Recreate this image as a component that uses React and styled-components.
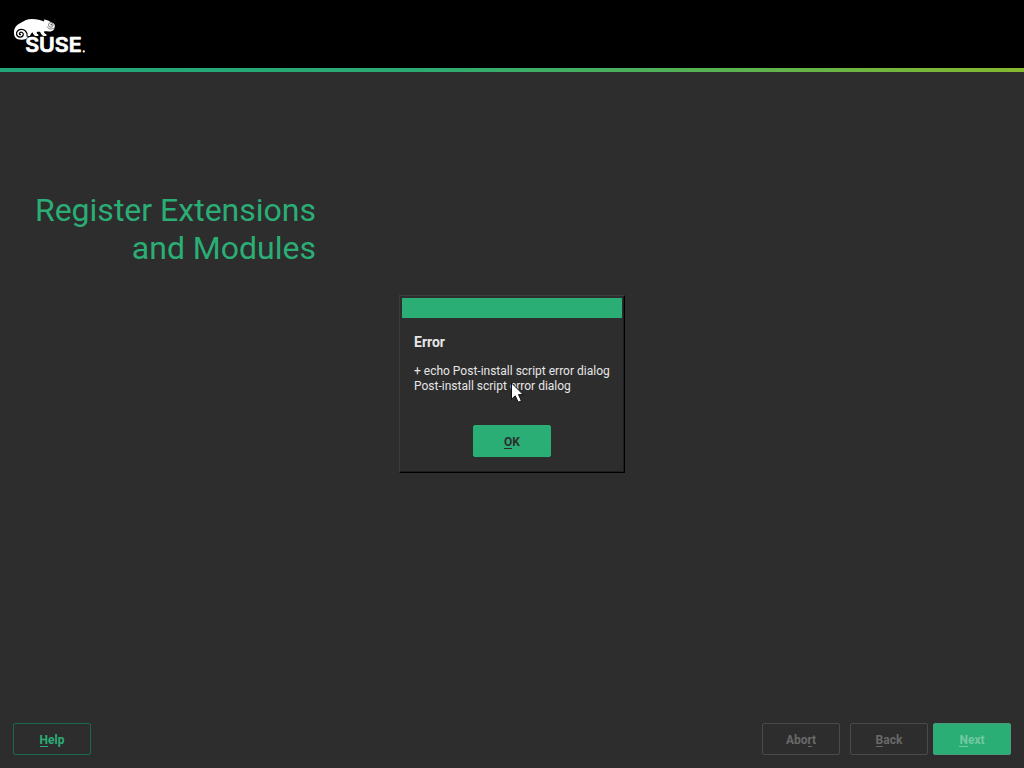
import React from "react";
import styled, { createGlobalStyle, css } from "styled-components";

const GlobalStyle = createGlobalStyle`
  body {
    margin: 0;
    background: #2d2d2d;
    font-family: Roboto, "Liberation Sans", sans-serif;
  }
  * { box-sizing: border-box; }
`;

const Screen = styled.div`
  position: relative;
  display: flex;
  flex-direction: column;
  width: 1024px;
  height: 768px;
  overflow: hidden;
  background: #2d2d2d;
`;

const Header = styled.header`
  flex: none;
  height: 68px;
  padding: 15px 0 0 10px;
  background: #000;
`;

const LogoSvg = styled.svg`
  display: block;
  width: 80px;
  height: 42px;
`;

const Wordmark = styled.text`
  font: 600 20.2px Inter, Roboto, sans-serif;
  fill: #fff;
  stroke: #fff;
  stroke-width: 0.7px;
  stroke-linejoin: round;
`;

const Stripe = styled.div`
  flex: none;
  height: 4px;
  background: linear-gradient(90deg, #21a57a 0%, #2aab74 40%, #86b92f 100%);
`;

const Main = styled.main`
  flex: 1;
  padding: 119px 0 0 20px;
`;

const Title = styled.h1`
  width: 296px;
  margin: 0;
  color: #2aae76;
  font-size: 32px;
  font-weight: 400;
  line-height: 38px;
  text-align: right;
`;

const Footer = styled.footer`
  flex: none;
  display: flex;
  justify-content: space-between;
  height: 45px;
  padding: 0 13px;
`;

const Actions = styled.div`
  display: flex;
  gap: ${({ $gap }) => $gap}px;
`;

const variants = {
  outline: css`
    color: #2aae76;
    border-color: #1a6b4b;
  `,
  disabled: css`
    color: #696969;
    border-color: #4a4a4a;
  `,
  disabledPrimary: css`
    color: #72c9a3;
    background: #2aae76;
    border-color: #4a9c78;
  `,
  primary: css`
    color: #2d2d2d;
    background: #2aae76;
    border-color: #2aae76;
  `,
};

const Button = styled.button`
  width: 78px;
  height: 32px;
  padding: 2px 0 0;
  border: 1px solid;
  border-radius: 2px;
  background: transparent;
  font: 700 12px/15px Roboto, sans-serif;
  ${({ $variant }) => variants[$variant]}
`;

const Mnemonic = styled.span`
  display: inline-block;
  height: 14px;
  box-shadow: inset 0 -1px currentColor;
`;

const Overlay = styled.div`
  position: absolute;
  left: 399px;
  top: 295px;
`;

const Dialog = styled.section`
  display: flex;
  flex-direction: column;
  width: 226px;
  height: 178px;
  padding: 2px 1px 0 2px;
  background: #2d2d2d;
  border: 1px solid;
  border-color: #3d3d3d #000 #000 #3d3d3d;
  box-shadow: inset -1px -1px #1e1e1e;
`;

const DialogBar = styled.div`
  width: 220px;
  height: 20px;
  background: #2aae76;
`;

const DialogBody = styled.div`
  display: flex;
  flex-direction: column;
  padding: 16px 0 0 12px;
  color: #e6e6e6;
`;

const DialogTitle = styled.h2`
  margin: 0;
  font-size: 14px;
  line-height: 16px;
  font-weight: 700;
`;

const Message = styled.p`
  margin: 14px 0 0;
  font-size: 12px;
  line-height: 15px;
  white-space: pre;
`;

const DialogActions = styled.div`
  display: flex;
  padding: 31px 0 0 59px;
`;

const Pointer = styled.svg`
  position: absolute;
  left: 510px;
  top: 381px;
  width: 15px;
  height: 23px;
`;

function Logo() {
  return (
    <LogoSvg viewBox="0 0 80 42" role="img" aria-label="SUSE">
      <path
        fill="#fff"
        d="M4 17.5C4 12.8 6.6 10 10 8.3C13.5 5.8 17.2 3.9 22 3.9C27 3.9 30.5 5.2 34 6.4C34.4 5.7 34.2 5.2 33.6 4.6C36 4.6 38.5 5.8 41 7.2C43.5 7.8 44.8 8.8 44.8 11C44.8 13.8 43.8 15.8 40.6 16.4C38 16.8 36 16.1 34.1 16.4C33.8 18 35 18.6 36.4 19.2V21H33.5C31.7 20.3 30.8 18.6 30 16.8H27C26.2 18.2 27 19.2 28.3 19.5V21H25.2C23.7 20.1 23 18.7 22.5 17.3C21 18 21 19.5 19.8 21H17.7C18.7 25 8 26.5 5.2 22.3C4.3 20.8 4 19 4 17.5Z"
      />
      <path
        fill="none"
        stroke="#000"
        strokeWidth="1.25"
        strokeLinecap="round"
        d="M17.1 21.2C17.5 16.5 14.5 14.3 11 14.4C8 14.6 6.2 16.8 6.6 19.3C7.2 22.6 12.7 23.1 13.3 19.7C13.6 17.6 11.2 16.5 9.9 17.8C9 18.7 9.6 19.9 10.5 19.7"
      />
      <path fill="none" stroke="#000" strokeWidth=".5" d="M37 11.5C38.6 14.4 41.5 14.6 44.5 12.8" />
      <circle cx="40.8" cy="9.9" r="2.3" fill="#fff" stroke="#000" strokeWidth=".5" />
      <ellipse cx="41.3" cy="9.7" rx=".9" ry=".5" />
      <Wordmark x="15.2" y="37.2" textLength="56.5" lengthAdjust="spacingAndGlyphs">SUSE</Wordmark>
      <circle cx="73.8" cy="36.4" r="1.15" fill="#fff" />
    </LogoSvg>
  );
}

export default function App() {
  return (
    <>
      <GlobalStyle />
      <Screen>
        <Header>
          <Logo />
        </Header>
        <Stripe />
        <Main>
          <Title>
            Register Extensions
            <br />
            and Modules
          </Title>
        </Main>
        <Footer>
          <Button $variant="outline">
            <Mnemonic>H</Mnemonic>elp
          </Button>
          <Actions $gap={5}>
            <Actions $gap={10}>
              <Button $variant="disabled">
                Abo<Mnemonic>r</Mnemonic>t
              </Button>
              <Button $variant="disabled">
                <Mnemonic>B</Mnemonic>ack
              </Button>
            </Actions>
            <Button $variant="disabledPrimary">
              <Mnemonic>N</Mnemonic>ext
            </Button>
          </Actions>
        </Footer>
        <Overlay>
          <Dialog role="dialog">
            <DialogBar />
            <DialogBody>
              <DialogTitle>Error</DialogTitle>
              <Message>{"+ echo Post-install script error dialog\nPost-install script error dialog"}</Message>
              <DialogActions>
                <Button $variant="primary">
                  <Mnemonic>O</Mnemonic>K
                </Button>
              </DialogActions>
            </DialogBody>
          </Dialog>
        </Overlay>
        <Pointer viewBox="0 0 15 23">
          <path
            d="M1.5 2V18.2L5.2 14.8L8.3 21.2L11.4 19.8L8.5 13.6H13.2Z"
            fill="#fff"
            stroke="#111"
            strokeWidth="1"
          />
        </Pointer>
      </Screen>
    </>
  );
}
